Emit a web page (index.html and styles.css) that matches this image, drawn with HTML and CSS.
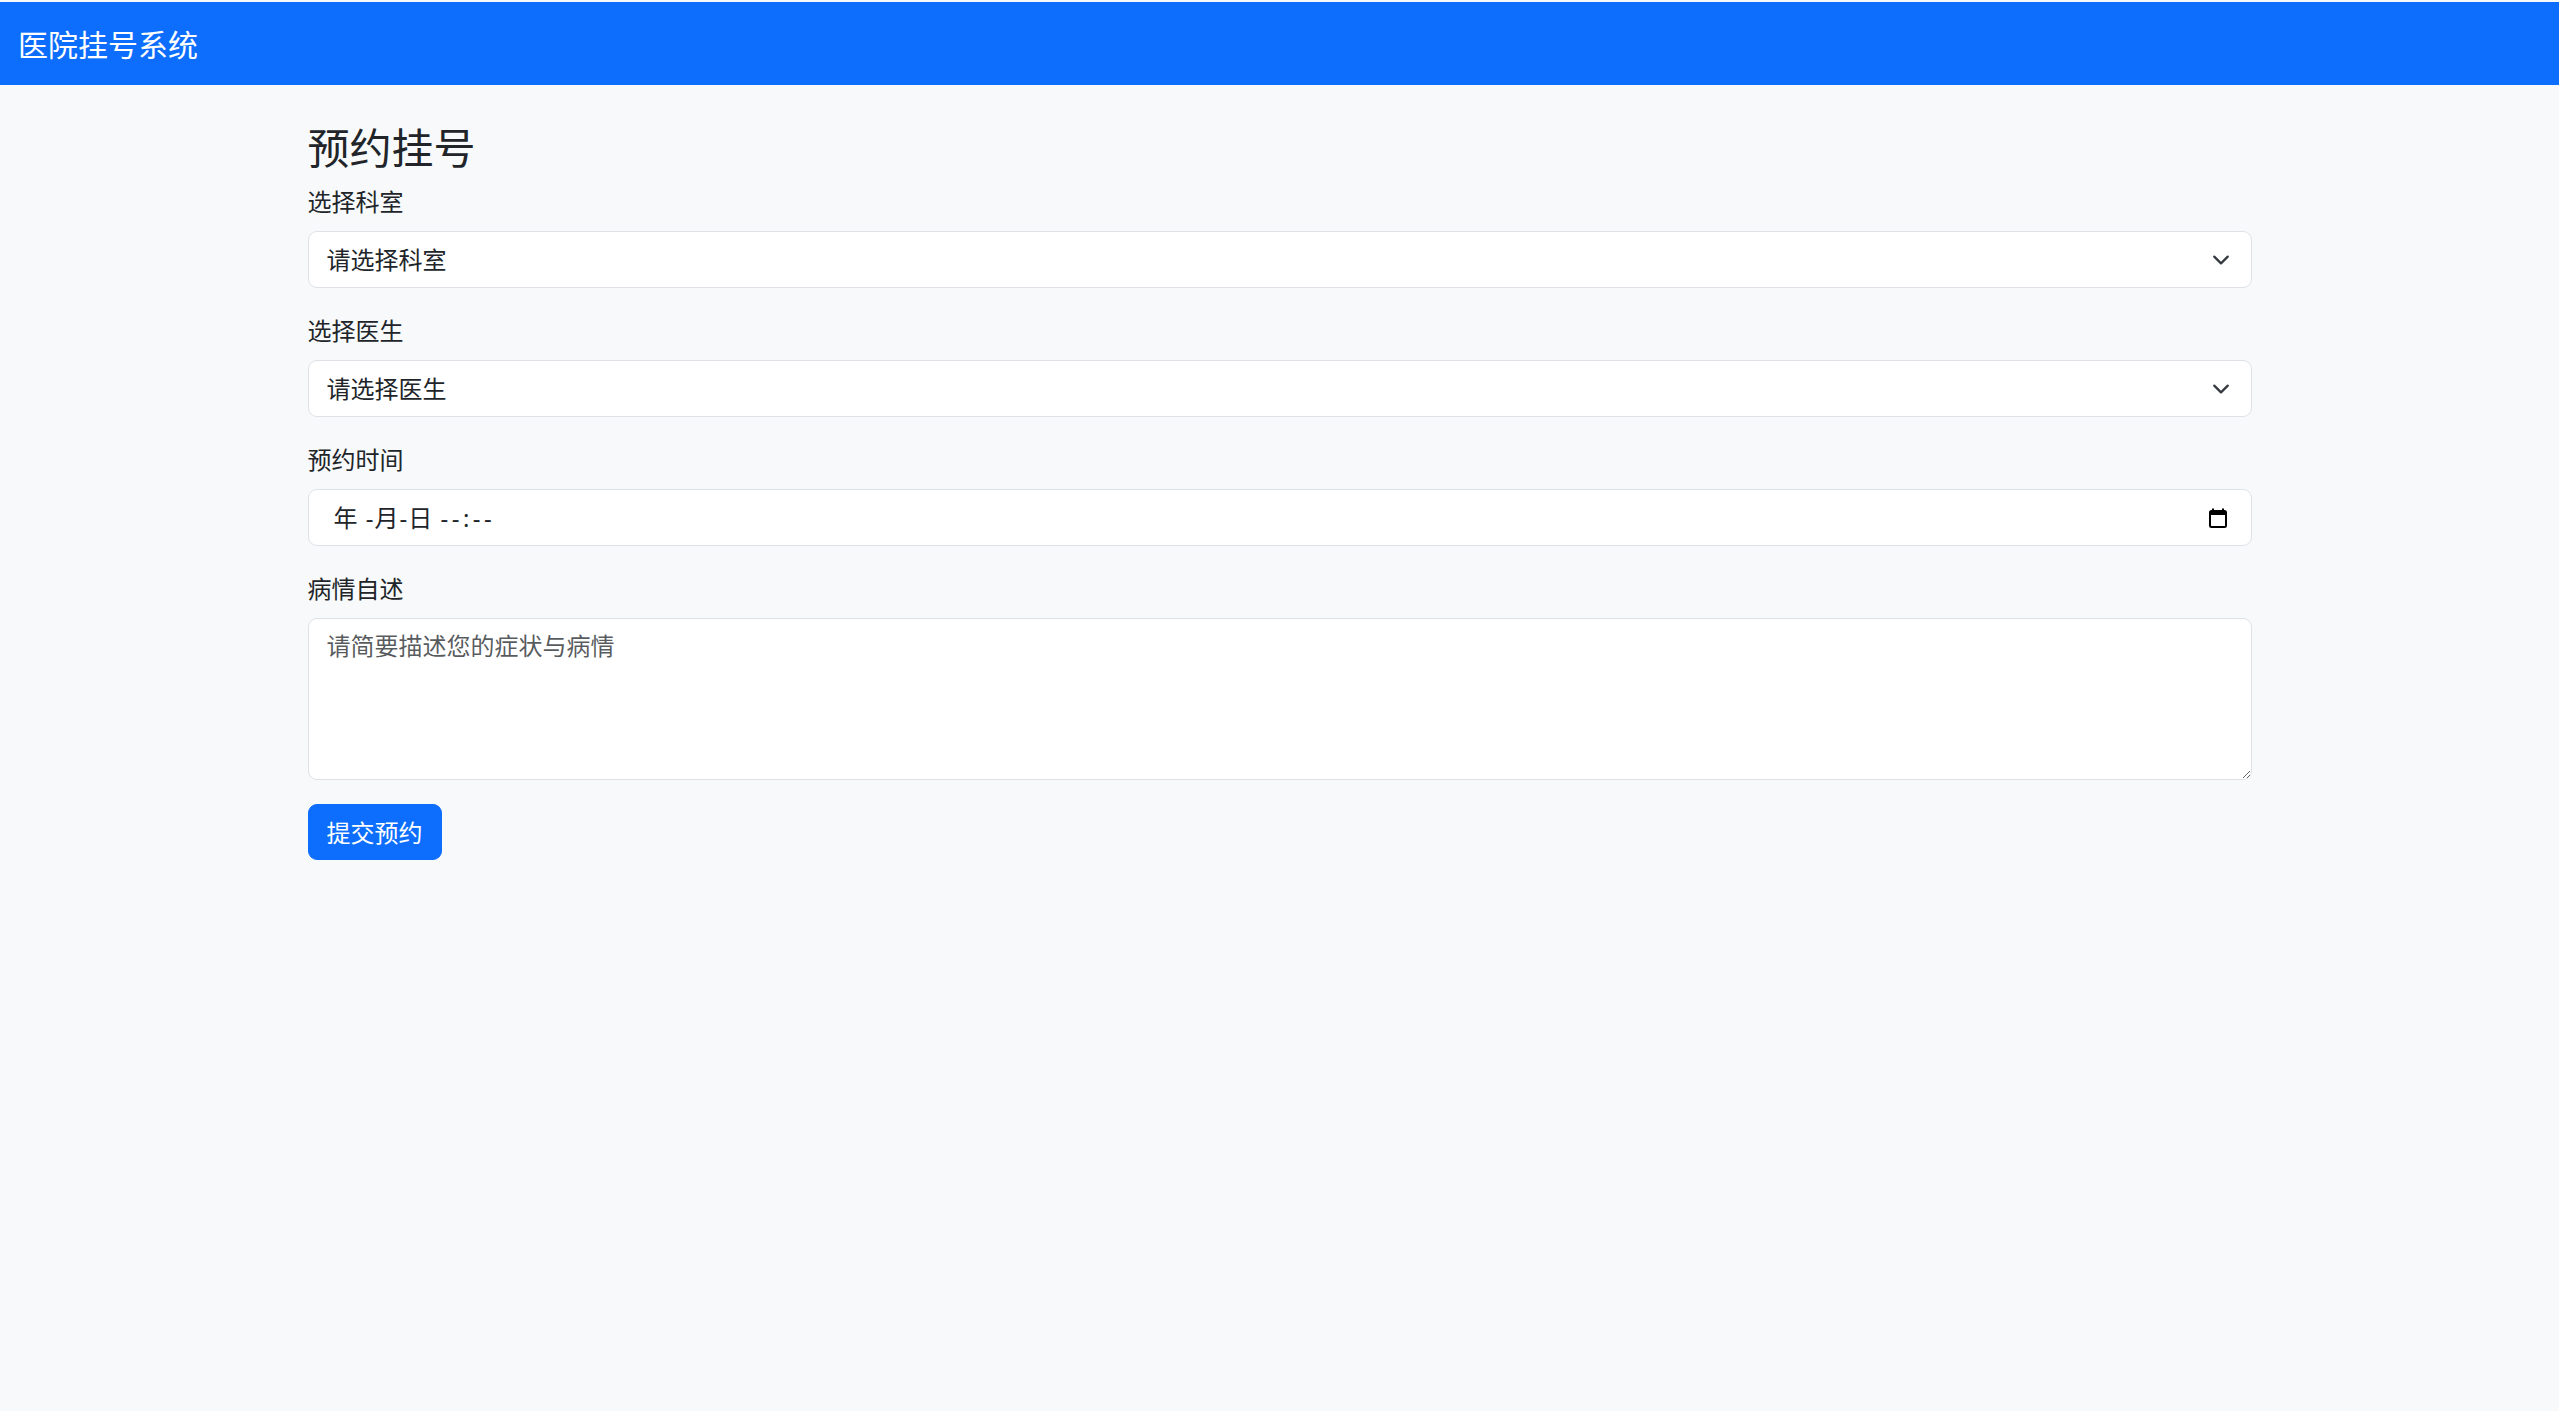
FILE: index.html
```html
<!DOCTYPE html>
<html lang="zh-CN">
<head>
<meta charset="utf-8">
<title>医院挂号系统</title>
<link rel="stylesheet" href="styles.css">
</head>
<body>
<nav class="navbar">
  <span class="brand">医院挂号系统</span>
</nav>
<main class="container">
  <h3 class="title">预约挂号</h3>
  <form class="form">
    <div class="group">
      <label class="label">选择科室</label>
      <select class="select"><option>请选择科室</option></select>
    </div>
    <div class="group">
      <label class="label">选择医生</label>
      <select class="select"><option>请选择医生</option></select>
    </div>
    <div class="group">
      <label class="label">预约时间</label>
      <div class="date-field">
        <span class="date-text">年 -月-日 <span class="time-part">--:--</span></span>
        <svg class="cal" width="20" height="20" viewBox="0 0 20 20" aria-hidden="true">
          <rect x="2" y="3" width="16" height="16" rx="1.5" fill="none" stroke="#000" stroke-width="2"/>
          <rect x="2" y="3" width="16" height="4" fill="#000"/>
          <rect x="4" y="0.5" width="2" height="4" fill="#000"/>
          <rect x="14" y="0.5" width="2" height="4" fill="#000"/>
        </svg>
      </div>
    </div>
    <div class="group">
      <label class="label">病情自述</label>
      <textarea class="textarea" placeholder="请简要描述您的症状与病情"></textarea>
    </div>
    <button type="button" class="btn">提交预约</button>
  </form>
</main>
</body>
</html>
```

FILE: styles.css
```css
* { box-sizing: border-box; }
html, body { margin: 0; }
body {
  background: #f8f9fa;
  padding-top: 2px;
  font-family: "Noto Sans", "Noto Sans CJK SC", sans-serif;
  color: #212529;
  min-height: 1411px;
}
.navbar {
  background: #0d6efd;
  height: 83px;
  display: flex;
  align-items: center;
  padding: 0 18px;
}
.brand {
  color: #fff;
  font-family: "Noto Sans CJK SC", sans-serif;
  font-size: 30px;
  line-height: 45px;
}
.container {
  width: 1944px;
  margin: 36px auto 0;
}
.title {
  font-family: "Noto Sans CJK SC", sans-serif;
  font-size: 42px;
  line-height: 50px;
  font-weight: 400;
  margin: 0 0 12px;
}
.group { margin-bottom: 24px; }
.label {
  display: block;
  font-family: "Noto Sans CJK SC", sans-serif;
  font-size: 24px;
  line-height: 36px;
  margin-bottom: 12px;
}
.select, .date-field, .textarea {
  display: block;
  width: 100%;
  background-color: #fff;
  border: 1px solid #dee2e6;
  border-radius: 9px;
  font-family: "Noto Sans", "Noto Sans CJK SC", sans-serif;
  font-size: 24px;
  line-height: 36px;
  color: #212529;
  margin: 0;
}
.select {
  height: 57px;
  padding: 9px 54px 9px 18px;
  appearance: none;
  -webkit-appearance: none;
  background-image: url("data:image/svg+xml,%3csvg xmlns='http://www.w3.org/2000/svg' viewBox='0 0 16 16'%3e%3cpath fill='none' stroke='%23343a40' stroke-linecap='round' stroke-linejoin='round' stroke-width='2' d='m2 5 6 6 6-6'/%3e%3c/svg%3e");
  background-repeat: no-repeat;
  background-position: right 18px center;
  background-size: 24px 18px;
}
.date-field {
  height: 57px;
  display: flex;
  align-items: center;
  justify-content: space-between;
  padding: 0 23px 0 25px;
}
.date-text { white-space: pre; letter-spacing: 1px; }
.time-part { letter-spacing: 3.5px; }
.cal { display: block; }
.textarea {
  height: 162px;
  padding: 9px 18px;
  resize: vertical;
  outline: none;
}
.textarea::placeholder { color: rgba(33, 37, 41, 0.75); }
.btn {
  display: inline-block;
  background: #0d6efd;
  color: #fff;
  border: 1px solid #0d6efd;
  border-radius: 9px;
  padding: 9px 18px;
  font-family: "Noto Sans CJK SC", sans-serif;
  font-size: 24px;
  line-height: 36px;
  cursor: pointer;
}
```
